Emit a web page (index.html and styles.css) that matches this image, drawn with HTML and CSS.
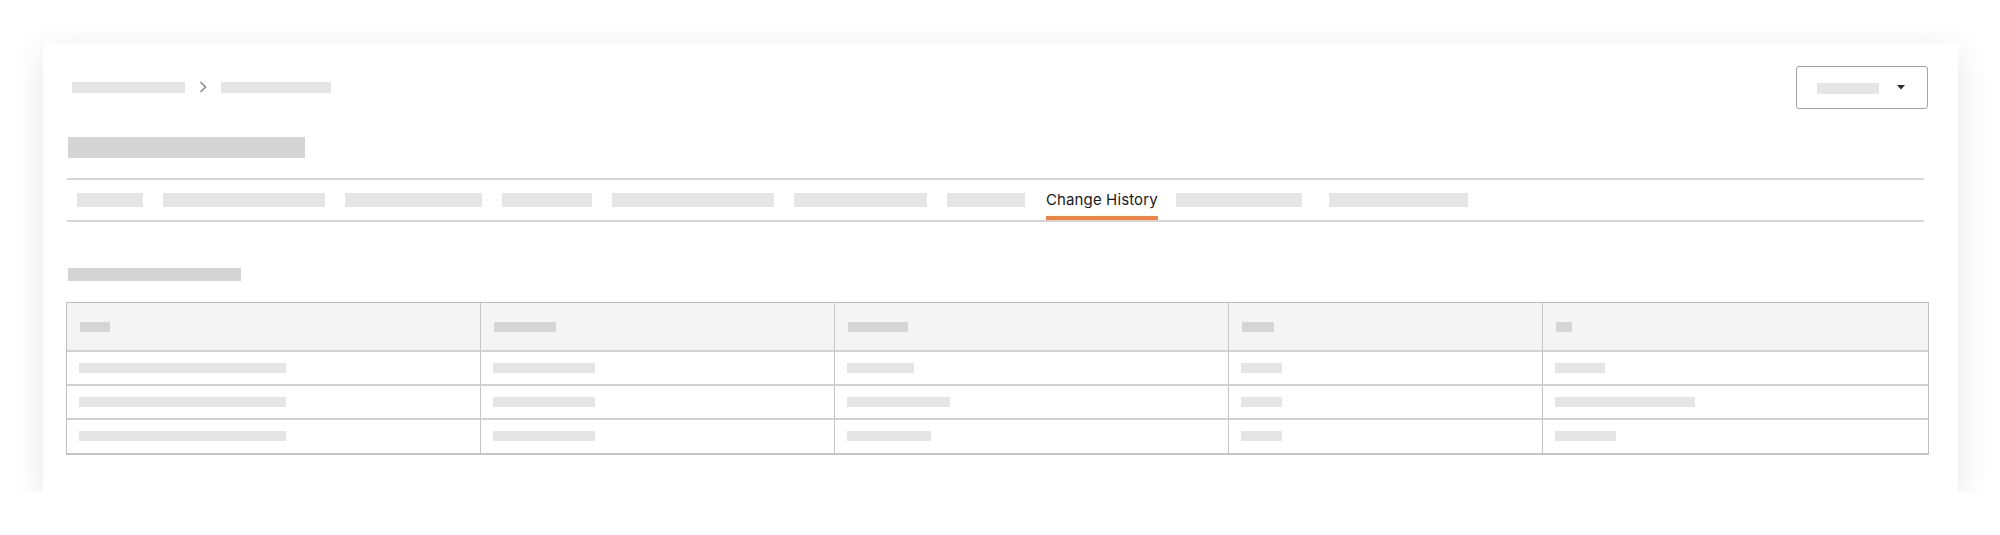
FILE: index.html
```html
<!DOCTYPE html>
<html lang="en">
<head>
<meta charset="utf-8">
<title>Change History</title>
<link rel="stylesheet" href="styles.css">
</head>
<body>
<div class="page">
  <div class="card">
    <div class="header">
      <div class="breadcrumb">
        <span class="sk sk-light" style="width:113px"></span>
        <svg class="chev" width="8" height="14" viewBox="0 0 8 14"><path d="M1.5 2 L6.5 7 L1.5 12" fill="none" stroke="#8c8c8c" stroke-width="1.6"/></svg>
        <span class="sk sk-light" style="width:110px"></span>
      </div>
      <div class="dropdown">
        <span class="sk sk-light dd-bar"></span>
        <svg class="caret" width="8" height="5" viewBox="0 0 8 5"><path d="M0 0 H8 L4 4.5 Z" fill="#2b2b2b"/></svg>
      </div>
    </div>

    <div class="title-bar"></div>

    <div class="tabs">
      <div class="tab"><span class="sk sk-tab" style="width:66px"></span></div>
      <div class="tab"><span class="sk sk-tab" style="width:162px"></span></div>
      <div class="tab"><span class="sk sk-tab" style="width:137px"></span></div>
      <div class="tab"><span class="sk sk-tab" style="width:90px"></span></div>
      <div class="tab"><span class="sk sk-tab" style="width:162px"></span></div>
      <div class="tab"><span class="sk sk-tab" style="width:133px"></span></div>
      <div class="tab"><span class="sk sk-tab" style="width:78px"></span></div>
      <div class="tab active">Change History</div>
      <div class="tab tab-after"><span class="sk sk-tab" style="width:126px"></span></div>
      <div class="tab tab-last"><span class="sk sk-tab" style="width:139px"></span></div>
    </div>

    <div class="section-title"></div>

    <table class="grid">
      <colgroup>
        <col class="c1"><col class="c2"><col class="c3"><col class="c4"><col class="c5">
      </colgroup>
      <thead>
        <tr>
          <th><span class="sk sk-head" style="width:30px"></span></th>
          <th><span class="sk sk-head" style="width:62px"></span></th>
          <th><span class="sk sk-head" style="width:60px"></span></th>
          <th><span class="sk sk-head" style="width:32px"></span></th>
          <th><span class="sk sk-head" style="width:16px"></span></th>
        </tr>
      </thead>
      <tbody>
        <tr>
          <td><span class="sk sk-cell" style="width:207px"></span></td>
          <td><span class="sk sk-cell" style="width:102px"></span></td>
          <td><span class="sk sk-cell" style="width:67px"></span></td>
          <td><span class="sk sk-cell" style="width:41px"></span></td>
          <td><span class="sk sk-cell" style="width:50px"></span></td>
        </tr>
        <tr>
          <td><span class="sk sk-cell" style="width:207px"></span></td>
          <td><span class="sk sk-cell" style="width:102px"></span></td>
          <td><span class="sk sk-cell" style="width:103px"></span></td>
          <td><span class="sk sk-cell" style="width:41px"></span></td>
          <td><span class="sk sk-cell" style="width:140px"></span></td>
        </tr>
        <tr>
          <td><span class="sk sk-cell" style="width:207px"></span></td>
          <td><span class="sk sk-cell" style="width:102px"></span></td>
          <td><span class="sk sk-cell" style="width:84px"></span></td>
          <td><span class="sk sk-cell" style="width:41px"></span></td>
          <td><span class="sk sk-cell" style="width:61px"></span></td>
        </tr>
      </tbody>
    </table>
  </div>
</div>
</body>
</html>
```

FILE: styles.css
```css
* { box-sizing: border-box; }

html, body {
  margin: 0;
  padding: 0;
  background: #ffffff;
  font-family: Inter, "Liberation Sans", sans-serif;
}

.page {
  padding: 43px 42px 0 43px;
}

.card {
  width: 1915px;
  height: 450px;
  flex: none;
  overflow: hidden;
  background: #ffffff;
  box-shadow: 0 8px 34px rgba(0, 0, 0, 0.1);
  padding: 23px 30px 0 24px;
  display: flex;
  flex-direction: column;
}

.sk {
  display: block;
  flex: none;
}

.sk-light { height: 11px; background: #e5e5e5; }
.sk-tab { height: 14px; background: #e5e5e5; }
.sk-head { height: 10px; background: #d5d5d5; margin-left: 1px; }
.sk-cell { height: 10px; background: #e5e5e5; }

.header {
  display: flex;
  justify-content: space-between;
  align-items: center;
  height: 43px;
  flex: none;
}

.breadcrumb {
  display: flex;
  align-items: center;
  padding-left: 5px;
  gap: 14px;
  margin-top: -1px;
}

.chev { display: block; flex: none; }

.dropdown {
  width: 132px;
  height: 43px;
  border: 1px solid #a3a3a3;
  border-radius: 3px;
  display: flex;
  align-items: center;
  padding-left: 20px;
}

.dd-bar { width: 62px; margin-top: 1px; }

.caret { display: block; margin-left: 18px; margin-top: 0; }

.title-bar {
  flex: none;
  width: 237px;
  height: 21px;
  background: #d5d5d5;
  margin-top: 28px;
  margin-left: 1px;
}

.tabs {
  flex: none;
  margin-top: 20px;
  margin-right: 4px;
  height: 44px;
  border-top: 2px solid #d6d6d6;
  border-bottom: 2px solid #d6d6d6;
  display: flex;
  align-items: stretch;
  gap: 20px;
  padding-left: 10px;
}

.tab {
  display: flex;
  align-items: center;
  padding-bottom: 1px;
}

.tab.active {
  font-size: 15px;
  letter-spacing: 0.12px;
  color: #1a1a1a;
  box-shadow: inset 0 -4px 0 #f0813f;
  padding-bottom: 2px;
  margin-left: 1px;
}

.tab-after { margin-left: -2px; }
.tab-last { margin-left: 7px; }

.section-title {
  flex: none;
  width: 173px;
  height: 13px;
  background: #d5d5d5;
  margin-top: 46px;
  margin-left: 1px;
}

.grid {
  flex: none;
  margin-top: 21px;
  margin-left: -1px;
  width: 1862px;
  border-collapse: separate;
  border-spacing: 0;
  border-left: 1px solid #bfbfbf;
  border-top: 1px solid #bfbfbf;
  table-layout: fixed;
}

.c1 { width: 414px; }
.c2 { width: 354px; }
.c3 { width: 394px; }
.c4 { width: 314px; }
.c5 { width: 386px; }

.grid th,
.grid td {
  padding: 0 12px;
  border-right: 1px solid #c6c6c6;
  border-bottom: 2px solid #d2d2d2;
  text-align: left;
  vertical-align: middle;
}

.grid th {
  background: #f4f4f4;
  padding-top: 19px;
  padding-bottom: 18px;
}

.grid td {
  padding-top: 11px;
  padding-bottom: 11px;
}

.grid th:last-child,
.grid td:last-child {
  border-right-color: #bfbfbf;
}

.grid tbody tr:last-child td {
  border-bottom-color: #c4c4c4;
  padding-bottom: 12px;
}
```
